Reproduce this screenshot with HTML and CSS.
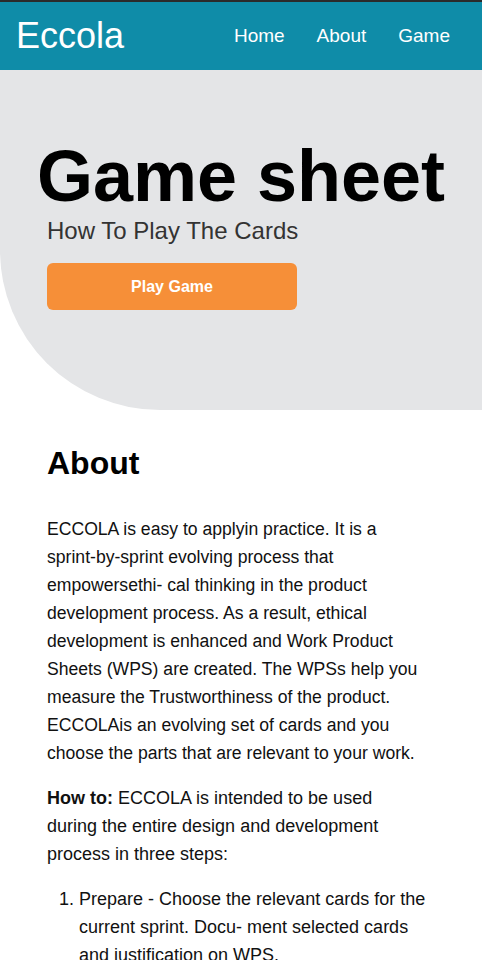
FILE: index.html
```html
<!DOCTYPE html>
<html lang="en">
<head>
  <meta charset="UTF-8" />
  <meta name="viewport" content="width=device-width, initial-scale=1" />
  <title>Eccola - Game sheet</title>
  <link rel="stylesheet" href="styles.css">
</head>
<body>

<header class="topbar">
  <a class="brand" href="#">Eccola</a>
  <nav class="menu">
    <a href="#">Home</a>
    <a href="#">About</a>
    <a href="#">Game</a>
  </nav>
</header>

<section class="hero">
  <h1>Game sheet</h1>
  <p class="subtitle">How To Play The Cards</p>
  <a class="play-btn" href="#">Play Game</a>
</section>

<main class="about">
  <h2>About</h2>
  <p>ECCOLA is easy to applyin practice. It is a sprint-by-sprint evolving process that empowersethi- cal thinking in the product development process. As a result, ethical development is enhanced and Work Product Sheets (WPS) are created. The WPSs help you measure the Trustworthiness of the product. ECCOLAis an evolving set of cards and you choose the parts that are relevant to your work.</p>
  <p class="howto"><b>How to:</b> ECCOLA is intended to be used during the entire design and development process in three steps:</p>
  <ol class="steps">
    <li>Prepare - Choose the relevant cards for the current sprint. Docu- ment selected cards and justification on WPS.</li>
    <li>Review - Keep the selected cards at hand during the sprint and review them while working.</li>
    <li>Evaluate - At the end of the sprint, evaluate the choices made and update the WPS.</li>
  </ol>
</main>

</body>
</html>
```

FILE: styles.css
```css
body {
  font-family: "Liberation Sans", Arial, sans-serif;
  color: #111;
  margin: 0;
  padding: 0;
  background: white;
}
.topbar {
  background-color: #0f8ca8;
  border-top: 2px solid #2b2b2b;
  height: 70px;
  display: flex;
  align-items: center;
  justify-content: space-between;
  padding: 0 32px 0 16px;
  box-sizing: border-box;
}
.brand {
  color: white;
  font-size: 36px;
  text-decoration: none;
}
.menu {
  display: flex;
  gap: 32px;
}
.menu a {
  color: white;
  font-size: 19px;
  text-decoration: none;
}
.hero {
  background-color: #e4e5e7;
  border-bottom-left-radius: 160px;
  padding: 65px 47px 100px;
}
.hero h1 {
  font-size: 72px;
  margin: 0 -47px;
  text-align: center;
  white-space: nowrap;
  color: #000;
  line-height: normal;
}
.subtitle {
  font-size: 24px;
  color: #333;
  margin: 0 0 18px;
}
.play-btn {
  display: flex;
  align-items: center;
  justify-content: center;
  width: 250px;
  height: 47px;
  background-color: #f68f38;
  color: white;
  font-weight: bold;
  font-size: 16px;
  text-decoration: none;
  border-radius: 6px;
}
.about {
  padding: 35px 56.5px 20px 47px;
  font-size: 17.6px;
  line-height: 28px;
}
.about h2 {
  font-size: 32px;
  line-height: normal;
  margin: 0 0 33px;
  color: #000;
}
.about p {
  margin: 0 0 17px;
}
.about .howto,
.about .steps {
  font-size: 18px;
}
.about ol {
  margin: 0;
  padding-left: 32px;
}
```
